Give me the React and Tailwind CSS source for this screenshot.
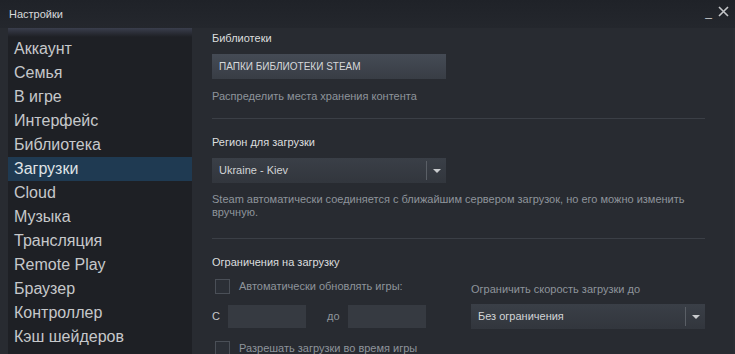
import React from "react";

const navItems = [
  "Аккаунт",
  "Семья",
  "В игре",
  "Интерфейс",
  "Библиотека",
  "Загрузки",
  "Cloud",
  "Музыка",
  "Трансляция",
  "Remote Play",
  "Браузер",
  "Контроллер",
  "Кэш шейдеров",
];

function Checkbox() {
  return <div className="w-[15px] h-[15px] border border-[#4a4f57] bg-[#2b2f36] shrink-0" />;
}

function Dropdown({ value, className = "" }) {
  return (
    <div className={`h-[25px] flex items-center bg-gradient-to-b from-[#3a3f47] to-[#32363d] ${className}`}>
      <span className="flex-1 pl-[7px] text-[11px] text-[#d2d4d6]">{value}</span>
      <div className="w-px h-[19px] bg-[#5a5f66]" />
      <div className="w-[19px] flex justify-center">
        <div className="w-0 h-0 border-l-[4px] border-r-[4px] border-t-[4px] border-l-transparent border-r-transparent border-t-[#c9cbce]" />
      </div>
    </div>
  );
}

export default function App() {
  return (
    <div
      className="w-[735px] h-[354px] overflow-hidden bg-[#282b31] text-[#c6c8cb] flex flex-col"
      style={{ fontFamily: '"Liberation Sans", Arial, sans-serif' }}
    >
      {/* Title bar */}
      <div className="h-[28px] shrink-0 flex items-start justify-between bg-gradient-to-b from-[#1f2228] to-[#24272d]">
        <span className="pl-[9px] pt-[6px] text-[11px] text-[#d8dadc]">Настройки</span>
        <div className="flex items-center gap-[6px] pr-[6px] pt-[4px] text-[#c4c6c9]">
          <span className="text-[12px] leading-none pt-[2px]">_</span>
          <svg width="11" height="11" viewBox="0 0 11 11">
            <path d="M1 1L10 10M10 1L1 10" stroke="#c4c6c9" strokeWidth="1.6" />
          </svg>
        </div>
      </div>

      <div className="flex flex-1 min-h-0">
        {/* Sidebar */}
        <div className="ml-[8px] w-[184px] shrink-0 bg-[#1e2025] flex flex-col">
          <div className="h-[9px] bg-gradient-to-b from-[#3a3e4d] to-[#1e2025]" />
          <div className="flex flex-col">
            {navItems.map((item) => (
              <div
                key={item}
                className={`h-[24px] leading-[24px] pl-[6px] text-[16px] ${
                  item === "Загрузки" ? "bg-[#1f3a52] text-[#dfe3e6]" : "text-[#c6c8cb]"
                }`}
              >
                {item}
              </div>
            ))}
          </div>
        </div>

        {/* Content */}
        <div className="flex-1 pl-[20px] pr-[28px] pt-[2px] text-[11px]">
          <div className="text-[#dcdedf] h-[14px]">Библиотеки</div>
          <div className="mt-[10px] w-[234px] h-[25px] flex items-center pl-[7px] bg-gradient-to-b from-[#454b55] to-[#383d45] text-[10px] text-[#d6d8da]">
            ПАПКИ БИБЛИОТЕКИ STEAM
          </div>
          <div className="mt-[9px] text-[#8e949b]">Распределить места хранения контента</div>
          <div className="mt-[13px] h-px bg-[#3b3f46]" />

          <div className="mt-[15px] text-[#dcdedf]">Регион для загрузки</div>
          <Dropdown value="Ukraine - Kiev" className="mt-[8px] w-[234px]" />
          <div className="mt-[10px] text-[#8e949b] leading-[13px]">
            Steam автоматически соединяется с ближайшим сервером загрузок, но его можно изменить
            <br />
            вручную.
          </div>
          <div className="mt-[19px] h-px bg-[#3b3f46]" />

          <div className="mt-[15px] text-[#dcdedf]">Ограничения на загрузку</div>
          <div className="flex mt-[8px]">
            <div className="w-[259px]">
              <div className="flex items-center gap-[9px] pl-[3px] h-[16px]">
                <Checkbox />
                <span className="text-[#8e949b]">Автоматически обновлять игры:</span>
              </div>
              <div className="flex items-center mt-[10px] h-[23px]">
                <span className="w-[16px] text-[#c6c8cb]">С</span>
                <div className="w-[78px] h-[23px] bg-[#363a41]" />
                <span className="w-[42px] pl-[21px] text-[#8e949b]">до</span>
                <div className="w-[78px] h-[23px] bg-[#363a41]" />
              </div>
              <div className="flex items-center gap-[9px] pl-[3px] mt-[13px] h-[16px]">
                <Checkbox />
                <span className="text-[#8e949b]">Разрешать загрузки во время игры</span>
              </div>
            </div>
            <div className="pt-[2px]">
              <div className="text-[#8e949b]">Ограничить скорость загрузки до</div>
              <Dropdown value="Без ограничения" className="mt-[7px] w-[234px]" />
            </div>
          </div>
        </div>
        <div className="w-[10px] shrink-0 bg-[#2a2d33]" />
      </div>
    </div>
  );
}
